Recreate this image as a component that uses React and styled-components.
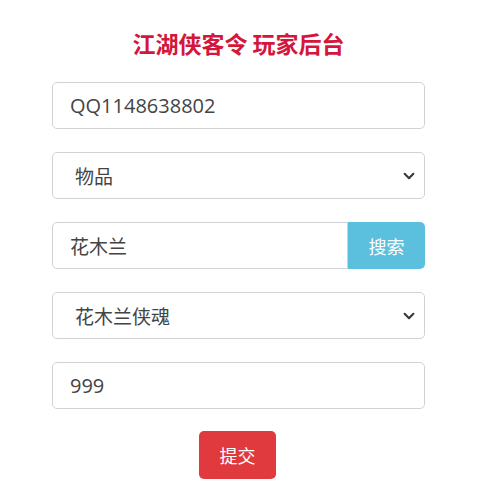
import React from "react"
import { styled, createGlobalStyle } from "styled-components"

const GlobalStyle = createGlobalStyle`
  body {
    margin: 0;
    background: #ffffff;
    font-family: "Open Sans", "Noto Sans CJK SC", sans-serif;
  }
`

export const Page = styled.div`
  width: 477px;
  padding: 30px 52px 20px;
  box-sizing: border-box;
  display: flex;
  flex-direction: column;
  gap: 23px;
`
export const Title = styled.h1`
  margin: 0 0 2px;
  height: 27px;
  text-align: center;
  font-size: 23px;
  line-height: 27px;
  font-weight: bold;
  color: #d4163c;
  font-family: "Noto Sans CJK SC", sans-serif;
`
export const Field = styled.input`
  display: block;
  width: 100%;
  height: 47px;
  box-sizing: border-box;
  padding: 0 17px;
  border: 1px solid #cfd3d8;
  border-radius: 5px;
  font-size: 20px;
  color: #444;
  font-family: "Open Sans", "Noto Sans CJK SC", sans-serif;
  background: #fff;
  outline: none;
`
export const Select = styled.select`
  display: block;
  width: 100%;
  height: 47px;
  box-sizing: border-box;
  padding: 0 40px 0 22px;
  border: 1px solid #cfd3d8;
  border-radius: 5px;
  font-size: 19px;
  color: #444;
  font-family: "Noto Sans CJK SC", sans-serif;
  appearance: none;
  background: #fff url("data:image/svg+xml,%3Csvg xmlns='http://www.w3.org/2000/svg' viewBox='0 0 16 16'%3E%3Cpath fill='none' stroke='%23343a40' stroke-linecap='round' stroke-linejoin='round' stroke-width='2.4' d='M3 5.5l5 5 5-5'/%3E%3C/svg%3E") no-repeat right 8px center / 14px 14px;
  outline: none;
`
export const Group = styled.div`
  display: flex;
  height: 47px;
`
export const GroupField = styled(Field)`
  flex: 1;
  border-radius: 5px 0 0 5px;
  font-family: "Noto Sans CJK SC", sans-serif;
  font-size: 19px;
`
export const Button = styled.button`
  width: 77px;
  height: ${(p) => (p.$tall ? "48px" : "47px")};
  border: none;
  border-radius: ${(p) => (p.$attached ? "0 5px 5px 0" : "5px")};
  background: ${(p) => p.$bg};
  color: #fff;
  font-size: 18px;
  font-family: "Noto Sans CJK SC", sans-serif;
  cursor: pointer;
  padding: 0;
`
export const Footer = styled.div`
  display: flex;
  justify-content: center;
  margin-top: -1px;
  padding-right: 2px;
`

export default function App() {
  return (
    <>
      <GlobalStyle />
      <Page>
        <Title>江湖侠客令 玩家后台</Title>
        <Field defaultValue="QQ1148638802" />
        <Select defaultValue="物品">
          <option>物品</option>
        </Select>
        <Group>
          <GroupField defaultValue="花木兰" />
          <Button $attached $bg="#5bc0de">搜索</Button>
        </Group>
        <Select defaultValue="花木兰侠魂">
          <option>花木兰侠魂</option>
        </Select>
        <Field defaultValue="999" />
        <Footer>
          <Button $tall $bg="#e0393e">提交</Button>
        </Footer>
      </Page>
    </>
  )
}
